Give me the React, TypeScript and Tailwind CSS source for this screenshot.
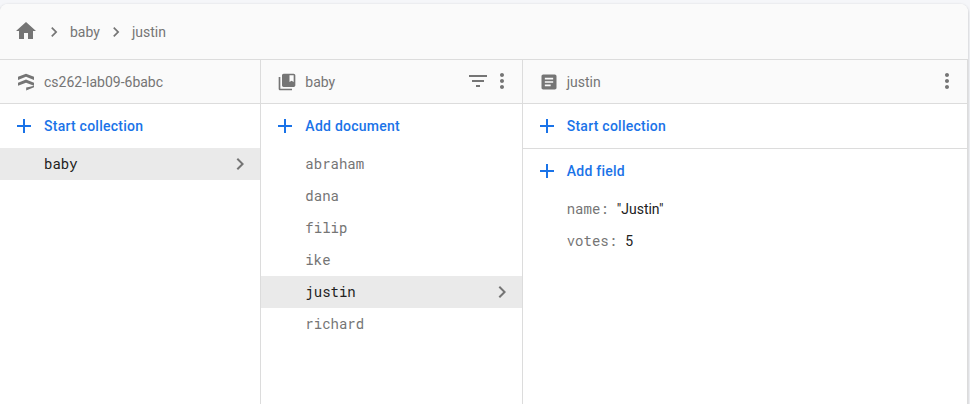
import React from "react";

const paths = {
  home: "M10 20v-6h4v6h5v-8h3L12 3 2 12h3v8z",
  chevron: "M10 6L8.59 7.41 13.17 12l-4.58 4.59L10 18l6-6z",
  plus: "M19 13h-6v6h-2v-6H5v-2h6V5h2v6h6v2z",
  filter: "M10 18h4v-2h-4v2zM3 6v2h18V6H3zm3 7h12v-2H6v2z",
  more: "M12 8c1.1 0 2-.9 2-2s-.9-2-2-2-2 .9-2 2 .9 2 2 2zm0 2c-1.1 0-2 .9-2 2s.9 2 2 2 2-.9 2-2-.9-2-2-2zm0 6c-1.1 0-2 .9-2 2s.9 2 2 2 2-.9 2-2-.9-2-2-2z",
  collection:
    "M4 6H2v14c0 1.1.9 2 2 2h14v-2H4V6zm16-4H8c-1.1 0-2 .9-2 2v12c0 1.1.9 2 2 2h12c1.1 0 2-.9 2-2V4c0-1.1-.9-2-2-2zm0 10l-2.5-1.5L15 12V4h5v8z",
  article:
    "M19 3H5c-1.1 0-2 .9-2 2v14c0 1.1.9 2 2 2h14c1.1 0 2-.9 2-2V5c0-1.1-.9-2-2-2zm-5 14H7v-2h7v2zm3-4H7v-2h10v2zm0-4H7V7h10v2z",
  firestore: "M12 2l9.6 3.8v3.8L12 5.8 2.4 9.6V5.8zM12 9l9.6 3.8v3.8L12 12.8l-9.6 3.8v-3.8zM12.2 18.6l4.6-.9 4.8-1.3v1.8l-9.4 4z",
};

function Icon({ name, className }: { name: keyof typeof paths; className: string }) {
  return (
    <svg viewBox="0 0 24 24" fill="currentColor" className={`shrink-0 ${className}`}>
      <path d={paths[name]} />
    </svg>
  );
}

function AddButton({ label }: { label: string }) {
  return (
    <button className="flex h-11 w-full items-center gap-2 pl-3 text-sm font-medium tracking-[0.25px] text-[#1a73e8]">
      <Icon name="plus" className="size-6" />
      {label}
    </button>
  );
}

function Row({ label, selected = false }: { label: string; selected?: boolean }) {
  return (
    <div
      className={`flex h-8 items-center justify-between pr-2 pl-11 font-['Roboto_Mono','Liberation_Mono',monospace] text-sm ${
        selected ? "bg-[#eaeaea] text-[#212121]" : "text-[#757575]"
      }`}
    >
      {label}
      {selected && <Icon name="chevron" className="size-6 text-[#757575]" />}
    </div>
  );
}

function Heading({ children }: { children: React.ReactNode }) {
  return <div className="flex h-11 items-center border-b border-[#dcdcdc] bg-[#fafafa] pr-2 pl-4 text-[#757575]">{children}</div>;
}

function Field({ name, children }: { name: string; children: React.ReactNode }) {
  return (
    <div className="flex h-8 items-center pl-11">
      <span className="mr-2 font-['Roboto_Mono','Liberation_Mono',monospace] text-[#757575]">{name}:</span>
      <span className="text-[#212121]">{children}</span>
    </div>
  );
}

export default function App() {
  return (
    <div className="h-[404px] w-[970px] overflow-hidden bg-[#f5f6f9] pt-1 font-[Roboto,sans-serif] text-sm">
      <div className="flex h-[420px] w-[968px] flex-col overflow-hidden rounded-t-lg bg-white shadow-[0_1px_3px_rgba(0,0,0,0.25)]">
        <div className="flex h-14 items-center border-b border-[#dcdcdc] bg-[#fafafa] pl-3.5 text-[#757575]">
          <Icon name="home" className="mb-0.5 size-6" />
          <Icon name="chevron" className="ml-1.5 size-5" />
          <span className="ml-1.5 w-9">baby</span>
          <Icon name="chevron" className="size-5" />
          <span className="ml-1.5">justin</span>
        </div>
        <div className="flex flex-1">
          <div className="w-[27%] border-r border-[#dcdcdc]">
            <Heading>
              <Icon name="firestore" className="mr-2 size-5" />
              cs262-lab09-6babc
            </Heading>
            <AddButton label="Start collection" />
            <Row label="baby" selected />
          </div>
          <div className="w-[27%] border-r border-[#dcdcdc]">
            <Heading>
              <Icon name="collection" className="mr-2 size-5" />
              <span className="flex-1">baby</span>
              <Icon name="filter" className="mb-0.5 size-6" />
              <Icon name="more" className="mb-0.5 size-6" />
            </Heading>
            <AddButton label="Add document" />
            <Row label="abraham" />
            <Row label="dana" />
            <Row label="filip" />
            <Row label="ike" />
            <Row label="justin" selected />
            <Row label="richard" />
          </div>
          <div className="flex-1 border-r border-[#dcdcdc]">
            <Heading>
              <Icon name="article" className="mr-2 size-5" />
              <span className="flex-1">justin</span>
              <Icon name="more" className="mb-0.5 size-6" />
            </Heading>
            <AddButton label="Start collection" />
            <div className="border-t border-[#dcdcdc]">
              <AddButton label="Add field" />
              <Field name="name">"Justin"</Field>
              <Field name="votes">5</Field>
            </div>
          </div>
        </div>
      </div>
    </div>
  );
}
